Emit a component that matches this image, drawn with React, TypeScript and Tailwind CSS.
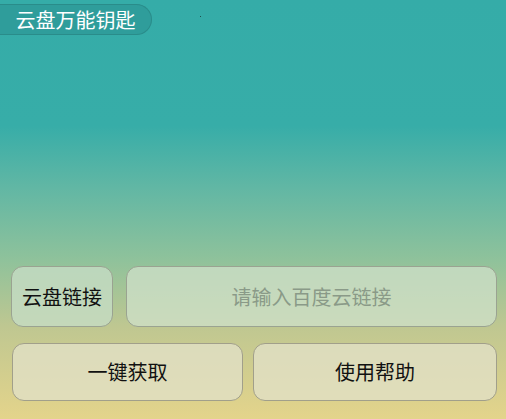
const font = "font-['Noto_Sans_CJK_SC','Noto_Sans',sans-serif]";

const App = () => {
  return (
    <div
      className={`${font} relative flex h-[419px] w-full flex-col justify-between overflow-hidden bg-[linear-gradient(180deg,#35aca8_0%,#37ada8_30%,#62b7a4_45%,#8fc29b_62%,#bfc791_78%,#e4d48b_100%)]`}
    >
      {/* Title pill */}
      <div className="mt-[4px] flex h-[31px] w-[152px] items-center justify-center rounded-r-full border border-l-0 border-[#2a8c8a] bg-[#2f9d9b] text-[20px] leading-none text-white">
        云盘万能钥匙
      </div>
      <span className="absolute left-[200px] top-[16px] h-[1px] w-[1px] bg-[#1d4f4c]" />

      {/* Controls */}
      <div className="mb-[18px] flex flex-col gap-[16px]">
        <div className="flex gap-[13px] pl-[11px] pr-[9px]">
          <button className="h-[61px] w-[102px] shrink-0 rounded-[12px] border border-[#9aa391] bg-[#c6dcc4]/80 text-[20px] text-[#111]">
            云盘链接
          </button>
          <input
            className="h-[61px] flex-1 rounded-[12px] border border-[#9aa391] bg-[#cfe0c9]/75 text-center text-[20px] text-[#333] outline-none placeholder:text-[#8a9a88]"
            placeholder="请输入百度云链接"
          />
        </div>
        <div className="flex gap-[10px] pl-[12px]">
          <button className="h-[58px] w-[231px] rounded-[12px] border border-[#a19f8a] bg-[#e1e0c6]/80 text-[20px] text-[#111]">
            一键获取
          </button>
          <button className="h-[58px] w-[244px] rounded-[12px] border border-[#a19f8a] bg-[#e1e0c6]/80 text-[20px] text-[#111]">
            使用帮助
          </button>
        </div>
      </div>
    </div>
  );
};

export default App;
